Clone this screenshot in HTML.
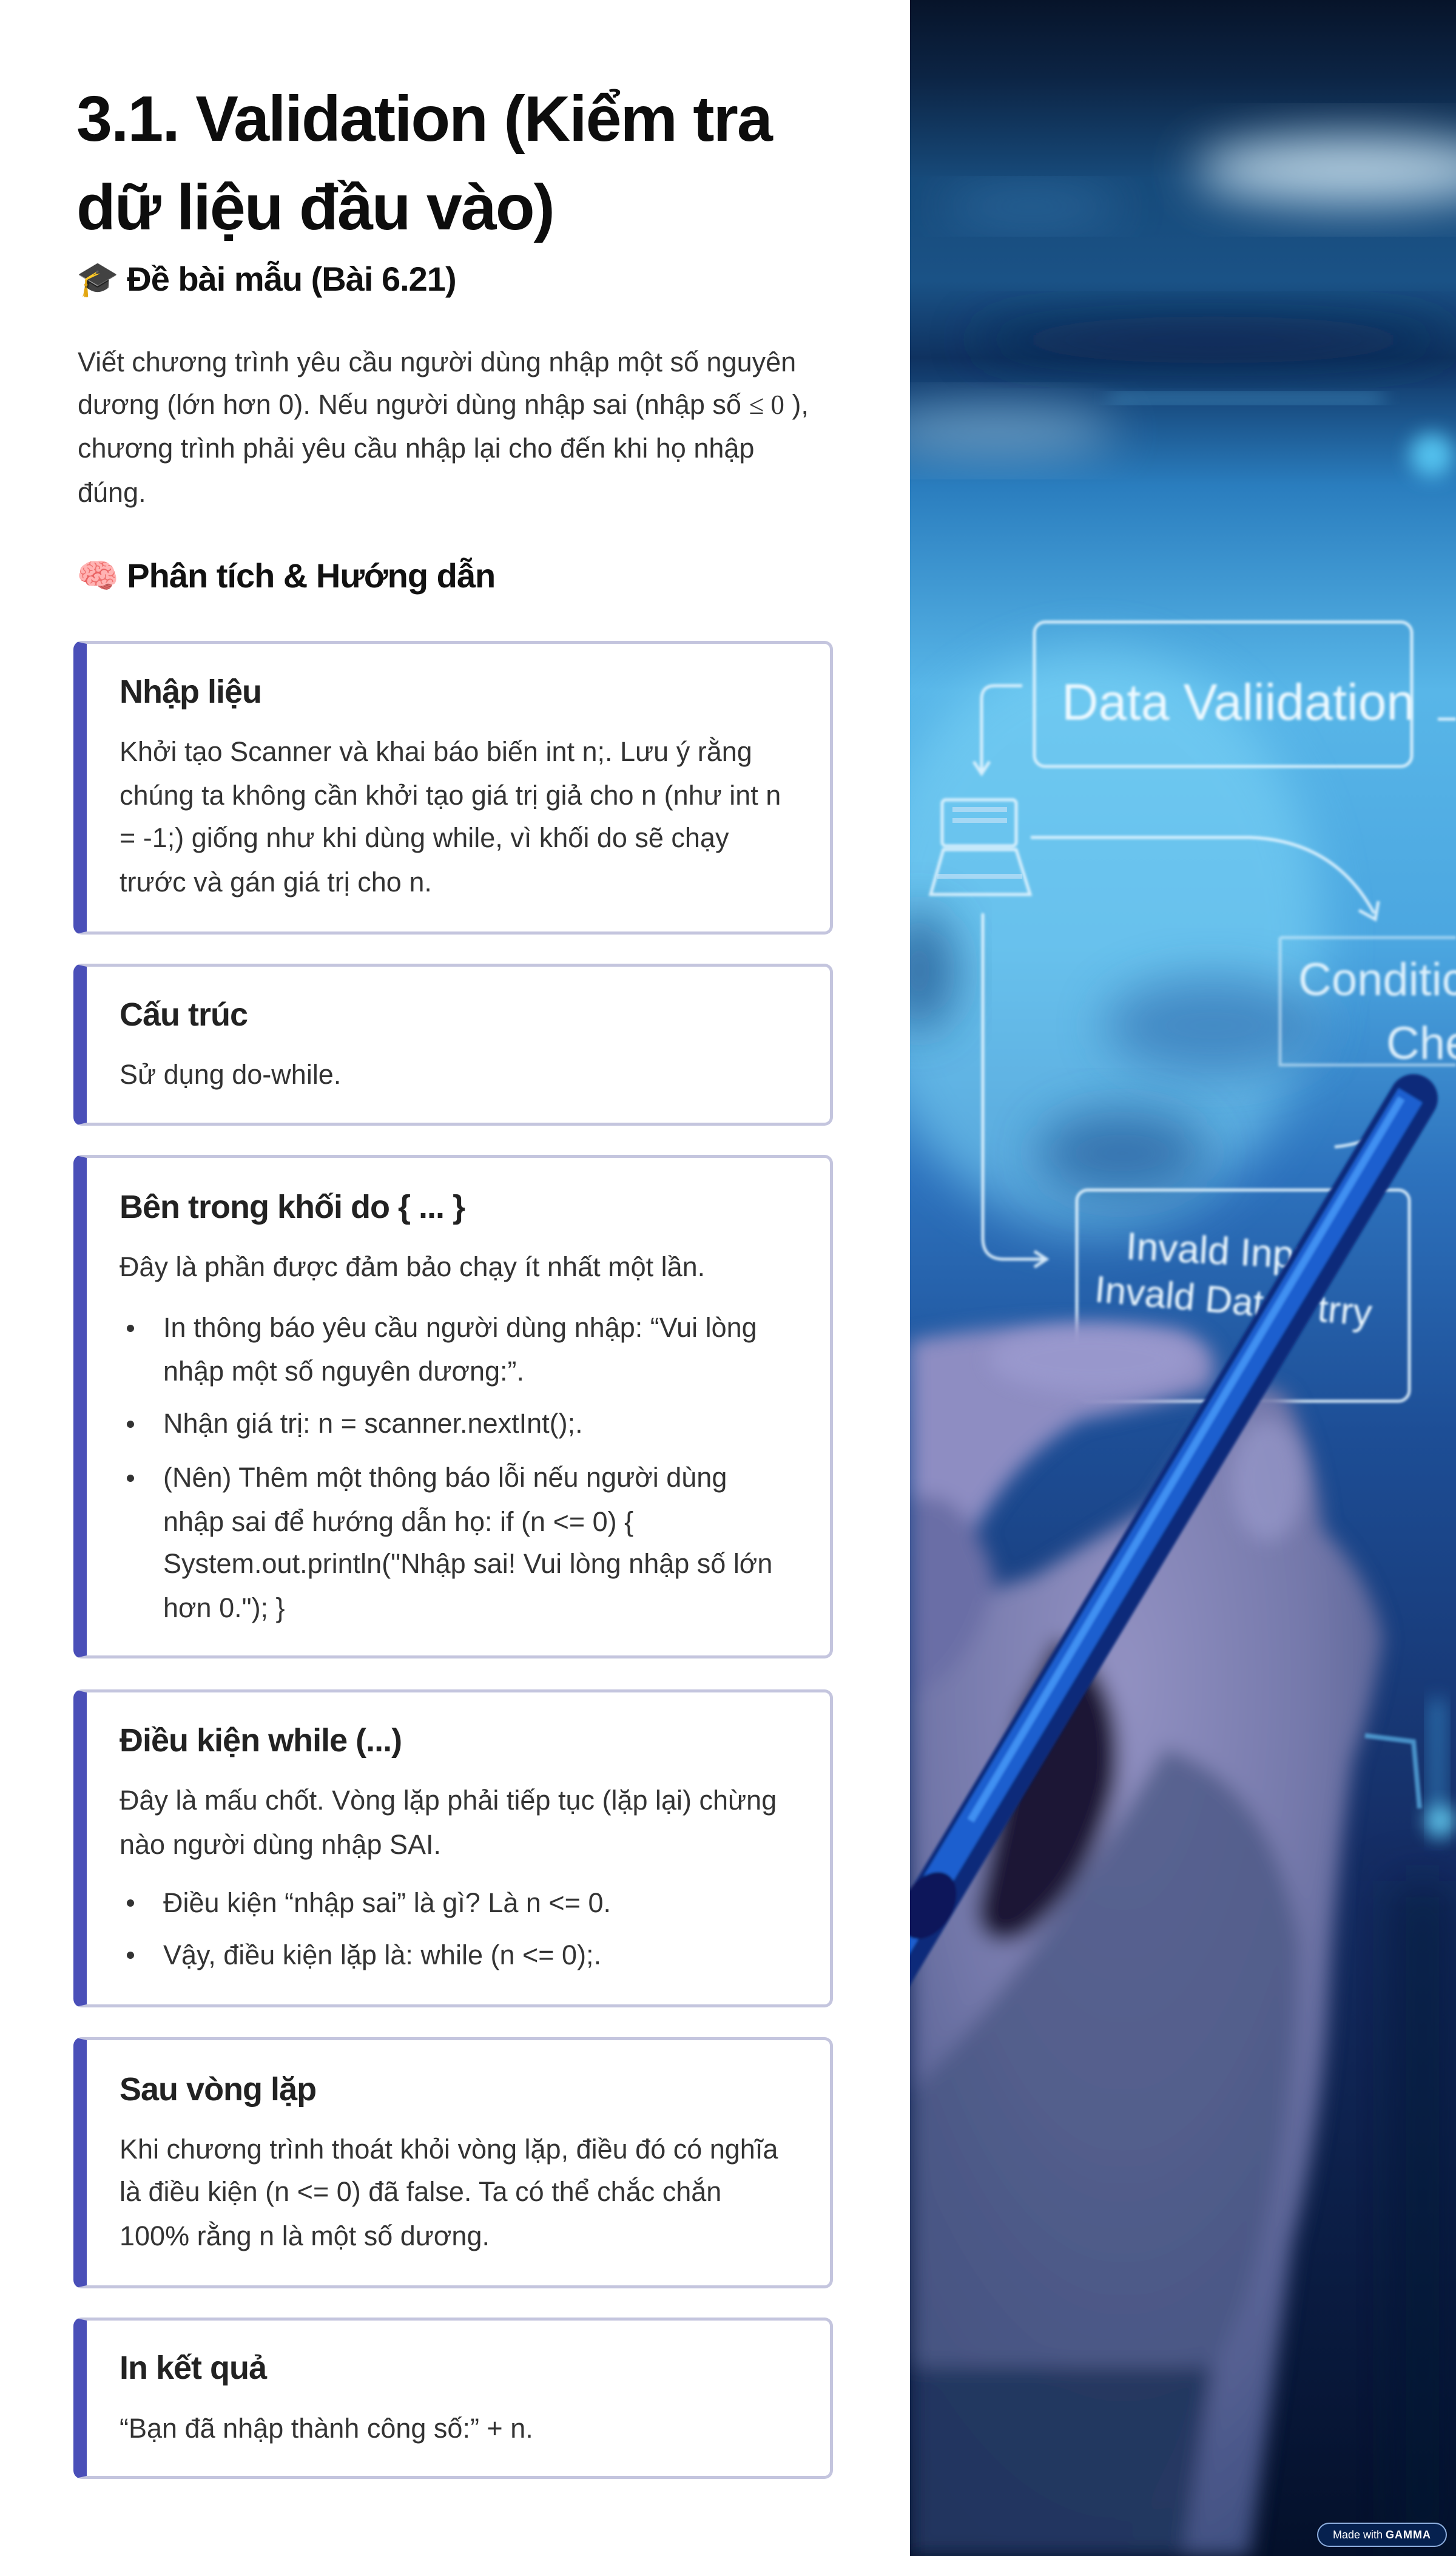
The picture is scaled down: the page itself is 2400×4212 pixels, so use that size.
<!DOCTYPE html>
<html><head><meta charset="utf-8">
<style>
*{margin:0;padding:0;box-sizing:border-box}
html,body{width:2400px;height:4212px;overflow:hidden;background:#fff}
body{position:relative;font-family:"Liberation Sans","Noto Sans CJK SC",sans-serif;color:#2c2c2c}
.l{position:absolute;white-space:nowrap;height:72px;line-height:72px}
.t{font-weight:bold;color:#0d0d0d;font-size:106px;letter-spacing:-2px;height:146px;line-height:146px}
.h{font-weight:bold;color:#111;font-size:56px;letter-spacing:-1px}
.p{font-size:45px;color:#333}
.ct{font-weight:bold;font-size:54px;color:#222;letter-spacing:-1px}
.card{position:absolute;left:121px;width:1252px;border:5px solid #c4c5de;border-left:22px solid #4a4fb8;border-radius:14px;background:#fff}
.dot{position:absolute;width:12px;height:12px;border-radius:50%;background:#333}
.img{position:absolute;left:1500px;top:0;width:900px;height:4212px;overflow:hidden}
</style></head><body>

<div class="l t" style="left:126px;top:123px">3.1. Validation (Kiểm tra</div>
<div class="l t" style="left:126px;top:269px">dữ liệu đầu vào)</div>
<div class="l h" style="left:126px;top:424px">🎓 Đề bài mẫu (Bài 6.21)</div>

<div class="l p" style="left:128px;top:561px">Viết chương trình yêu cầu người dùng nhập một số nguyên</div>
<div class="l p" style="left:128px;top:631px">dương (lớn hơn 0). Nếu người dùng nhập sai (nhập số <span style="font-family:'Liberation Serif',serif">≤ 0</span> ),</div>
<div class="l p" style="left:128px;top:703px">chương trình phải yêu cầu nhập lại cho đến khi họ nhập</div>
<div class="l p" style="left:128px;top:776px">đúng.</div>

<div class="l h" style="left:126px;top:913px">🧠 Phân tích &amp; Hướng dẫn</div>

<div class="card" style="top:1056px;height:484px"></div>
<div class="l ct" style="left:197px;top:1104px">Nhập liệu</div>
<div class="l p" style="left:197px;top:1203px">Khởi tạo Scanner và khai báo biến int n;. Lưu ý rằng</div>
<div class="l p" style="left:197px;top:1275px">chúng ta không cần khởi tạo giá trị giả cho n (như int n</div>
<div class="l p" style="left:197px;top:1345px">= -1;) giống như khi dùng while, vì khối do sẽ chạy</div>
<div class="l p" style="left:197px;top:1418px">trước và gán giá trị cho n.</div>

<div class="card" style="top:1588px;height:267px"></div>
<div class="l ct" style="left:197px;top:1636px">Cấu trúc</div>
<div class="l p" style="left:197px;top:1735px">Sử dụng do-while.</div>

<div class="card" style="top:1903px;height:830px"></div>
<div class="l ct" style="left:197px;top:1953px">Bên trong khối do { ... }</div>
<div class="l p" style="left:197px;top:2052px">Đây là phần được đảm bảo chạy ít nhất một lần.</div>
<div class="dot" style="left:209px;top:2183px"></div>
<div class="l p" style="left:269px;top:2152px">In thông báo yêu cầu người dùng nhập: “Vui lòng</div>
<div class="l p" style="left:269px;top:2224px">nhập một số nguyên dương:”.</div>
<div class="dot" style="left:209px;top:2341px"></div>
<div class="l p" style="left:269px;top:2310px">Nhận giá trị: n = scanner.nextInt();.</div>
<div class="dot" style="left:209px;top:2430px"></div>
<div class="l p" style="left:269px;top:2399px">(Nên) Thêm một thông báo lỗi nếu người dùng</div>
<div class="l p" style="left:269px;top:2472px">nhập sai để hướng dẫn họ: if (n &lt;= 0) {</div>
<div class="l p" style="left:269px;top:2541px">System.out.println("Nhập sai! Vui lòng nhập số lớn</div>
<div class="l p" style="left:269px;top:2614px">hơn 0."); }</div>

<div class="card" style="top:2784px;height:524px"></div>
<div class="l ct" style="left:197px;top:2832px">Điều kiện while (...)</div>
<div class="l p" style="left:197px;top:2931px">Đây là mấu chốt. Vòng lặp phải tiếp tục (lặp lại) chừng</div>
<div class="l p" style="left:197px;top:3004px">nào người dùng nhập SAI.</div>
<div class="dot" style="left:209px;top:3130px"></div>
<div class="l p" style="left:269px;top:3100px">Điều kiện “nhập sai” là gì? Là n &lt;= 0.</div>
<div class="dot" style="left:209px;top:3216px"></div>
<div class="l p" style="left:269px;top:3186px">Vậy, điều kiện lặp là: while (n &lt;= 0);.</div>

<div class="card" style="top:3357px;height:414px"></div>
<div class="l ct" style="left:197px;top:3407px">Sau vòng lặp</div>
<div class="l p" style="left:197px;top:3506px">Khi chương trình thoát khỏi vòng lặp, điều đó có nghĩa</div>
<div class="l p" style="left:197px;top:3576px">là điều kiện (n &lt;= 0) đã false. Ta có thể chắc chắn</div>
<div class="l p" style="left:197px;top:3649px">100% rằng n là một số dương.</div>

<div class="card" style="top:3819px;height:266px"></div>
<div class="l ct" style="left:197px;top:3866px">In kết quả</div>
<div class="l p" style="left:197px;top:3966px">“Bạn đã nhập thành công số:” + n.</div>

<div class="img">
<svg width="900" height="4212" viewBox="1500 0 900 4212" xmlns="http://www.w3.org/2000/svg">
<defs>
<linearGradient id="bg" x1="0" y1="0" x2="0" y2="1">
<stop offset="0" stop-color="#07142a"/>
<stop offset="0.03" stop-color="#0c2444"/>
<stop offset="0.07" stop-color="#174a7a"/>
<stop offset="0.11" stop-color="#1a5286"/>
<stop offset="0.14" stop-color="#0f3260"/>
<stop offset="0.19" stop-color="#2a7dbe"/>
<stop offset="0.27" stop-color="#58b6e8"/>
<stop offset="0.37" stop-color="#4ba6e0"/>
<stop offset="0.46" stop-color="#2d72bd"/>
<stop offset="0.56" stop-color="#1d4e96"/>
<stop offset="0.72" stop-color="#152e66"/>
<stop offset="0.86" stop-color="#0c1f48"/>
<stop offset="1" stop-color="#04102a"/>
</linearGradient>
<radialGradient id="hand" cx="0.45" cy="0.25" r="0.8">
<stop offset="0" stop-color="#9291c2"/>
<stop offset="0.5" stop-color="#7478aa"/>
<stop offset="1" stop-color="#3e4e80"/>
</radialGradient>
<filter id="b1" x="-50%" y="-50%" width="200%" height="200%"><feGaussianBlur stdDeviation="40"/></filter>
<filter id="b2" x="-50%" y="-50%" width="200%" height="200%"><feGaussianBlur stdDeviation="16"/></filter>
<filter id="b3"><feGaussianBlur stdDeviation="2"/></filter>
</defs>
<rect x="1500" y="0" width="900" height="4212" fill="url(#bg)"/>
<ellipse cx="2230" cy="280" rx="260" ry="55" fill="#d2e8f4" opacity="0.85" filter="url(#b1)"/>
<ellipse cx="1640" cy="710" rx="200" ry="40" fill="#a8cde4" opacity="0.55" filter="url(#b1)"/>
<ellipse cx="1700" cy="340" rx="150" ry="25" fill="#3d7fb5" opacity="0.6" filter="url(#b1)"/>
<rect x="1830" y="650" width="450" height="12" fill="#6fd0ff" opacity="0.6" filter="url(#b2)"/>
<circle cx="2360" cy="750" r="36" fill="#5fd6ff" opacity="0.8" filter="url(#b2)"/>
<ellipse cx="2000" cy="560" rx="400" ry="40" fill="#0b2850" opacity="0.7" filter="url(#b1)"/>
<ellipse cx="1800" cy="1550" rx="380" ry="480" fill="#80d8f8" opacity="0.55" filter="url(#b1)"/>
<ellipse cx="2000" cy="1690" rx="180" ry="80" fill="#2d6aad" opacity="0.6" filter="url(#b1)"/>
<ellipse cx="1515" cy="1600" rx="60" ry="100" fill="#1d4d88" opacity="0.7" filter="url(#b1)"/>
<ellipse cx="1850" cy="1900" rx="140" ry="70" fill="#1b4f90" opacity="0.6" filter="url(#b1)"/>
<g fill="none" stroke="#e6f6ff" stroke-width="5" opacity="0.9" filter="url(#b3)">
<rect x="1705" y="1025" width="622" height="238" rx="18"/>
<path d="M1685 1130 L1640 1130 Q1618 1130 1618 1152 L1618 1270 M1605 1255 L1618 1275 L1631 1255"/>
<path d="M1699 1380 L2060 1380 Q2200 1385 2265 1505 M2240 1500 L2267 1515 L2272 1485"/>
<rect x="1553" y="1318" width="122" height="76" rx="6"/>
<path d="M1534 1474 L1555 1400 L1675 1400 L1698 1474 Z"/>
<path d="M1620 1505 L1620 2040 Q1620 2075 1655 2075 L1720 2075 M1705 2062 L1725 2075 L1705 2088"/>
<rect x="1775" y="1961" width="548" height="348" rx="18"/>
<path d="M2110 1545 L2400 1545 M2110 1545 L2110 1755 L2400 1755" opacity="0.6"/>
<path d="M2200 1890 Q2300 1880 2340 1800"/>
<path d="M2370 1185 L2400 1185"/>
</g>
<g fill="#cfe6f8" opacity="0.6"><rect x="1570" y="1330" width="90" height="8"/><rect x="1570" y="1348" width="90" height="8"/><rect x="1545" y="1440" width="140" height="8"/></g>
<g font-family="Liberation Sans, sans-serif" fill="#eef9ff" filter="url(#b3)">
<text x="1750" y="1186" font-size="84">Data Valiidation</text>
<text x="2140" y="1640" font-size="76" opacity="0.9">Conditic</text>
<text x="2285" y="1745" font-size="76" opacity="0.9">Che</text>
<text x="1855" y="2075" font-size="64" transform="rotate(3 1855 2075)">Invald Input</text>
<text x="1803" y="2145" font-size="62" transform="rotate(5 1803 2145)">Invald Data - trry</text>
</g>
<!-- hand -->
<g filter="url(#b2)">
<path d="M1500 2210 Q1700 2170 1940 2190 Q2030 2220 1990 2290 Q1880 2320 1780 2340 Q1680 2400 1620 2500 Q1560 2600 1500 2660 Z" fill="#8e8dc2"/>
<path d="M1500 2720 Q1600 2620 1700 2600 L1900 2480 Q1980 2360 2010 2330 Q2060 2260 2120 2300 Q2170 2400 2180 2520 Q2260 2600 2280 2700 Q2260 2820 2230 2900 Q2200 3100 2190 3300 Q2180 3500 2130 3700 L2060 4212 L1500 4212 Z" fill="url(#hand)"/>
<path d="M1500 2470 Q1590 2440 1640 2600 Q1620 2700 1560 2760 L1500 2800 Z" fill="#6a6ea6"/>
<path d="M1740 2700 Q1860 2760 1840 2940 Q1800 3110 1690 3190 Q1620 3220 1610 3150 L1680 2820 Z" fill="#1c1534"/>
<path d="M1920 2880 Q2100 2940 2140 3200 Q2140 3500 2050 3800 L1850 4212 L1500 4212 L1500 3450 Q1700 3250 1920 2880 Z" fill="#44527f" opacity="0.7"/>
<path d="M1500 3900 L2000 3900 L1950 4212 L1500 4212Z" fill="#1c2f58" opacity="0.8"/>
</g>
<ellipse cx="2090" cy="2440" rx="60" ry="100" fill="#a4a4d6" opacity="0.5" filter="url(#b2)"/>
<!-- pen in front -->
<g filter="url(#b3)">
<line x1="1460" y1="3260" x2="2330" y2="1810" stroke="#0a2a7a" stroke-width="80" stroke-linecap="round"/>
<line x1="1460" y1="3240" x2="2325" y2="1805" stroke="#1a5fcf" stroke-width="46"/>
<line x1="1600" y1="3000" x2="2310" y2="1810" stroke="#3f90f2" stroke-width="12"/>
<ellipse cx="1530" cy="3140" rx="60" ry="40" fill="#08185a" transform="rotate(-58 1530 3140)"/>
</g>
<!-- index fingertip over pen top -->
<ellipse cx="1800" cy="2240" rx="170" ry="55" fill="#9c9bd0" opacity="0.75" filter="url(#b2)"/>
<rect x="2358" y="2800" width="22" height="230" fill="#3fa8e6" opacity="0.6" filter="url(#b2)"/>
<circle cx="2375" cy="3000" r="25" fill="#6ee0ff" opacity="0.8" filter="url(#b2)"/>
<path d="M2250 2860 L2330 2870 L2340 2980" stroke="#5fb9ee" stroke-width="8" fill="none" opacity="0.7" filter="url(#b3)"/>
<rect x="2290" y="3100" width="110" height="1112" fill="#061530" opacity="0.5" filter="url(#b1)"/>
</svg>
</div>

<div style="position:absolute;left:2171px;top:4157px;width:214px;height:40px;border:2px solid #8fb0e0;border-radius:20px;background:#06214f;color:#fff;font-size:18px;line-height:36px;text-align:center;white-space:nowrap">Made with <b style="letter-spacing:1px">GAMMA</b></div>
</body></html>
